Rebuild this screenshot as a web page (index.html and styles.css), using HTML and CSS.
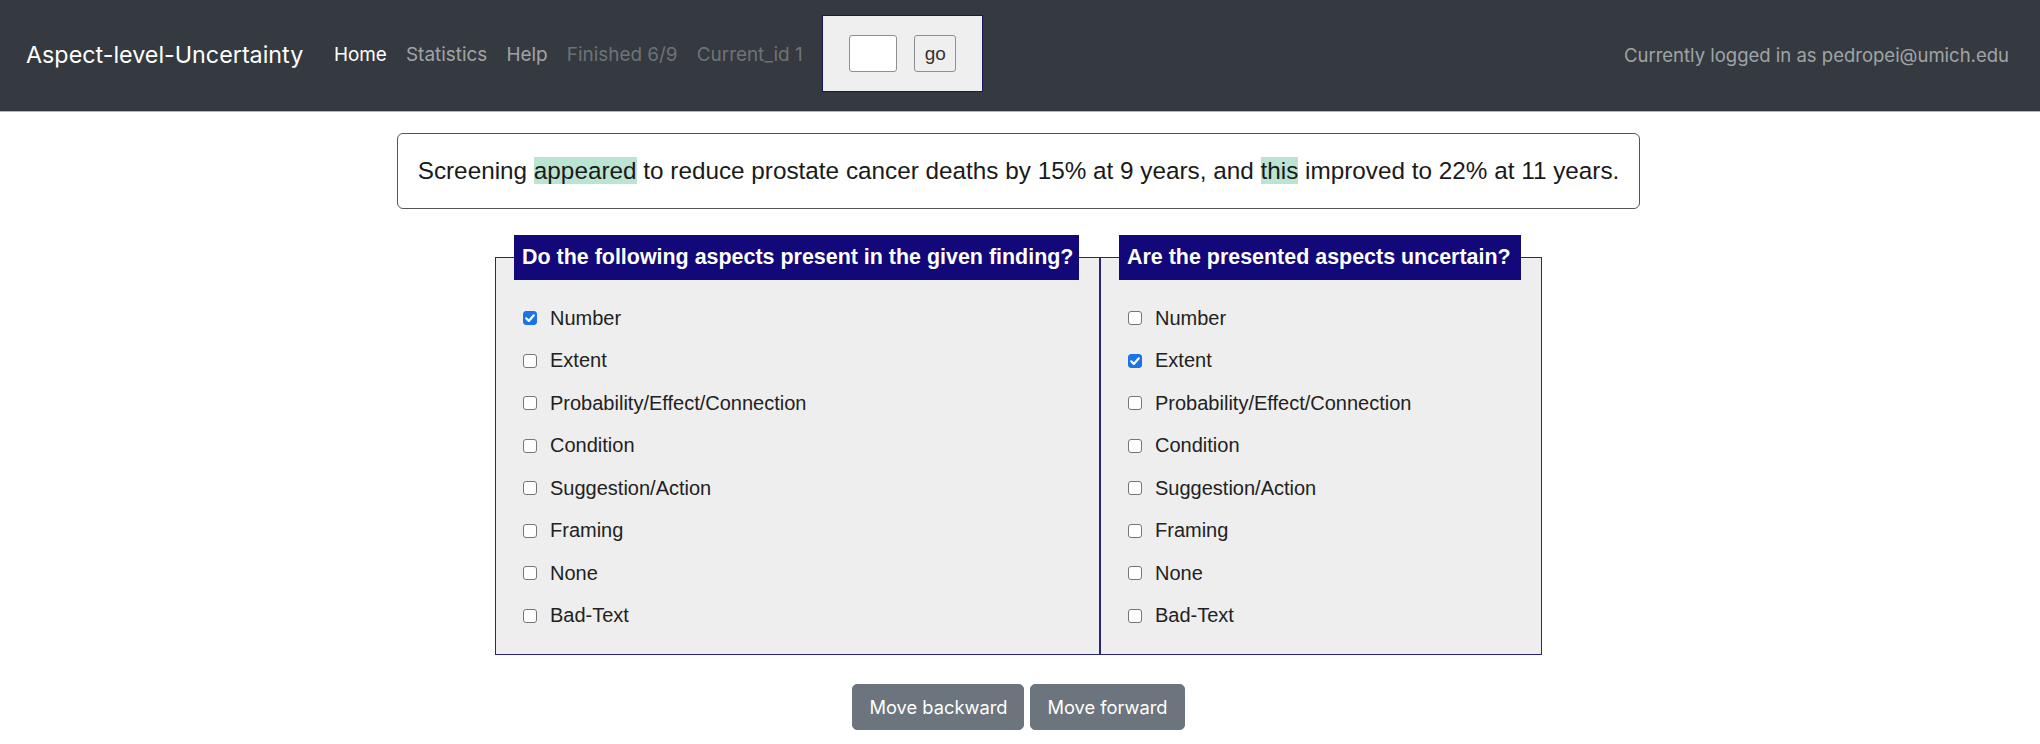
FILE: index.html
```html
<!DOCTYPE html>
<html lang="en">
<head>
<meta charset="utf-8">
<title>Aspect-level-Uncertainty</title>
<link rel="stylesheet" href="styles.css">
</head>
<body>
<nav class="navbar">
  <a class="brand" href="#">Aspect-level-Uncertainty</a>
  <ul class="nav">
    <li><a class="nav-link active" href="#">Home</a></li>
    <li><a class="nav-link" href="#">Statistics</a></li>
    <li><a class="nav-link" href="#">Help</a></li>
    <li><span class="nav-link disabled">Finished 6/9</span></li>
    <li><span class="nav-link disabled">Current_id 1</span></li>
  </ul>
  <form class="jump">
    <input class="jump-input" type="text" aria-label="id">
    <button class="jump-btn" type="button">go</button>
  </form>
  <span class="user">Currently logged in as pedropei@umich.edu</span>
</nav>

<main class="main">
  <div class="finding">Screening <mark class="hl">appeared</mark> to reduce prostate cancer deaths by 15% at 9 years, and <mark class="hl">this</mark> improved to 22% at 11 years.</div>

  <div class="panels">
    <fieldset class="panel">
      <legend class="panel-title">Do the following aspects present in the given finding?</legend>
      <label class="opt"><input class="cb" type="checkbox" checked> Number</label>
      <label class="opt"><input class="cb" type="checkbox"> Extent</label>
      <label class="opt"><input class="cb" type="checkbox"> Probability/Effect/Connection</label>
      <label class="opt"><input class="cb" type="checkbox"> Condition</label>
      <label class="opt"><input class="cb" type="checkbox"> Suggestion/Action</label>
      <label class="opt"><input class="cb" type="checkbox"> Framing</label>
      <label class="opt"><input class="cb" type="checkbox"> None</label>
      <label class="opt"><input class="cb" type="checkbox"> Bad-Text</label>
    </fieldset>
    <fieldset class="panel">
      <legend class="panel-title wide">Are the presented aspects uncertain?</legend>
      <label class="opt"><input class="cb" type="checkbox"> Number</label>
      <label class="opt"><input class="cb" type="checkbox" checked> Extent</label>
      <label class="opt"><input class="cb" type="checkbox"> Probability/Effect/Connection</label>
      <label class="opt"><input class="cb" type="checkbox"> Condition</label>
      <label class="opt"><input class="cb" type="checkbox"> Suggestion/Action</label>
      <label class="opt"><input class="cb" type="checkbox"> Framing</label>
      <label class="opt"><input class="cb" type="checkbox"> None</label>
      <label class="opt"><input class="cb" type="checkbox"> Bad-Text</label>
    </fieldset>
  </div>

  <div class="actions">
    <button class="btn" type="button">Move backward</button>
    <button class="btn" type="button">Move forward</button>
  </div>
</main>
</body>
</html>
```

FILE: styles.css
```css
* { box-sizing: border-box; }

body {
  margin: 0;
  background: #ffffff;
  font-family: "Liberation Sans", Arial, sans-serif;
  color: #212529;
}

.navbar {
  display: flex;
  align-items: center;
  height: 111px;
  padding: 0 31px 0 26px;
  background: #343a40;
  font-family: Inter, "Liberation Sans", sans-serif;
  box-shadow: 0 1px 0 #b4b4b4;
}

.brand {
  font-size: 23.3px;
  color: #ffffff;
  text-decoration: none;
  margin-right: 21px;
  margin-top: -2px;
}

.nav {
  display: flex;
  list-style: none;
  margin: -2px 0 0;
  padding: 0;
}

.nav-link {
  display: block;
  padding: 0 9.6px;
  font-size: 18.9px;
  color: rgba(255, 255, 255, 0.55);
  text-decoration: none;
}

.nav-link.active { color: #ffffff; }
.nav-link.disabled { color: rgba(255, 255, 255, 0.3); }

.jump {
  display: flex;
  align-items: center;
  gap: 17px;
  width: 161px;
  height: 77px;
  margin: -4px 0 0 10px;
  padding: 0 26px;
  background: #efefef;
  border: 1px solid #1b1464;
}

.jump-input {
  width: 48px;
  height: 37px;
  margin: 0;
  padding: 0;
  background: #ffffff;
  border: 1px solid #8f8f8f;
  border-radius: 3px;
}

.jump-btn {
  width: 42px;
  height: 37px;
  margin: 0;
  padding: 0;
  background: #efefef;
  border: 1px solid #8f8f8f;
  border-radius: 3px;
  font-family: "Liberation Sans", Arial, sans-serif;
  font-size: 19px;
  color: #333;
}

.user {
  margin-left: auto;
  margin-top: -2px;
  font-size: 18.5px;
  color: rgba(255, 255, 255, 0.55);
}

.main {
  display: flex;
  flex-direction: column;
  align-items: center;
  padding-right: 3px;
}

.finding {
  margin-top: 22px;
  padding: 19px 20px;
  border: 1px solid #555;
  border-radius: 6px;
  font-size: 24.3px;
  line-height: 36px;
  color: #1a1a1a;
  white-space: nowrap;
}

.hl {
  background: #bbe5d3;
  color: inherit;
}

.panels {
  display: grid;
  grid-template-columns: 605px 442px;
  margin-top: 26px;
}

.panel {
  margin: 0;
  min-width: 0;
  padding: 17px 19px 17px 18px;
  background: #eeeeee;
  border: 1px solid #2b2380;
}

.panel-title {
  padding: 0 6px 0 8px;
  background: #13087a;
  color: #ffffff;
  font-weight: bold;
  font-size: 21.45px;
  line-height: 45px;
  white-space: nowrap;
}

.panel-title.wide {
  padding-right: 10px;
}

.opt {
  display: flex;
  align-items: center;
  gap: 13px;
  height: 42.5px;
  padding-left: 9px;
  font-size: 20px;
  color: #222;
}

.cb {
  appearance: none;
  -webkit-appearance: none;
  flex: none;
  width: 14px;
  height: 14px;
  margin: 0;
  background: #ffffff;
  border: 1px solid #767676;
  border-radius: 3px;
}

.cb:checked {
  background: #1a73e8 url("data:image/svg+xml;utf8,<svg xmlns='http://www.w3.org/2000/svg' viewBox='0 0 14 14'><path d='M3.2 7.3l2.6 2.6 5-5.6' fill='none' stroke='white' stroke-width='2.2' stroke-linecap='round' stroke-linejoin='round'/></svg>") center / 14px 14px no-repeat;
  border-color: #1a73e8;
}

.actions {
  display: flex;
  gap: 6px;
  margin-top: 29px;
}

.btn {
  height: 46px;
  padding: 0 16px;
  background: #6c757d;
  border: 1px solid #6c757d;
  border-radius: 5px;
  color: #ffffff;
  font-family: Inter, "Liberation Sans", sans-serif;
  font-size: 18.3px;
}
```
